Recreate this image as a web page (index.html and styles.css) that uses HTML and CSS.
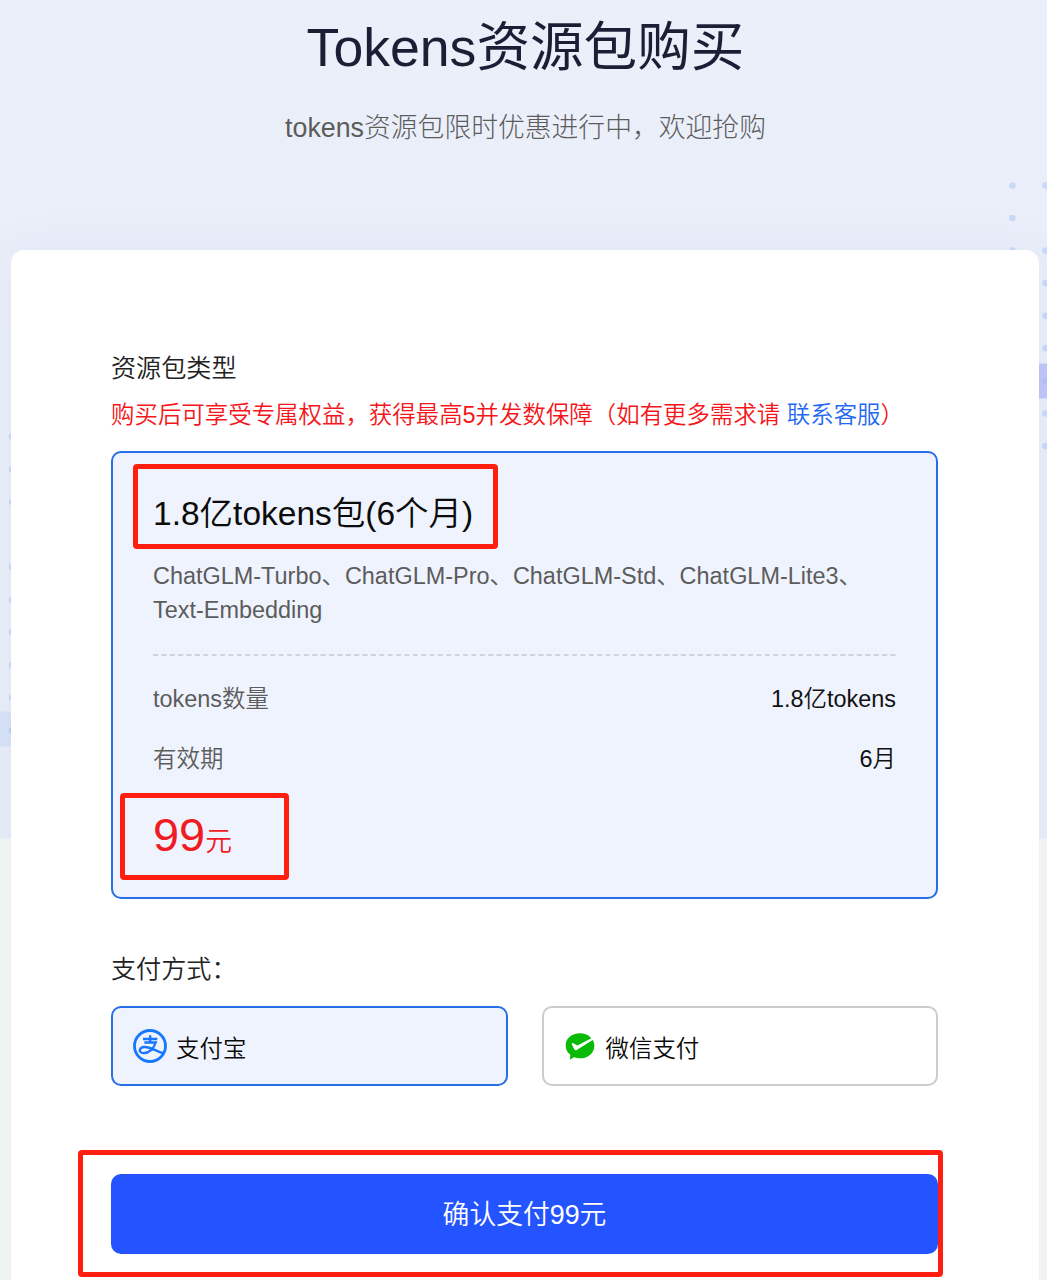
FILE: index.html
```html
<!DOCTYPE html>
<html lang="zh-CN">
<head>
<meta charset="utf-8">
<title>Tokens资源包购买</title>
<link rel="stylesheet" href="styles.css">
</head>
<body>
<div class="page">
  <svg class="decor" viewBox="0 0 1047 838" aria-hidden="true">
    <g fill="#c8daf9">
      <circle cx="1012.5" cy="185.5" r="3.3"/><circle cx="1012.5" cy="218" r="3.3"/><circle cx="1012.5" cy="250.5" r="3.3"/>
      <circle cx="1045.5" cy="185.5" r="3.3"/><circle cx="1045.5" cy="250.5" r="3.3"/><circle cx="1045.5" cy="283" r="3.3"/>
      <circle cx="1045.5" cy="315.7" r="3.3"/><circle cx="1045.5" cy="348.3" r="3.3"/><circle cx="1045.5" cy="413.5" r="3.3"/>
      <circle cx="1045.5" cy="446" r="3.3"/>
      <circle cx="12" cy="436.5" r="3.3"/><circle cx="12" cy="469.3" r="3.3"/><circle cx="12" cy="502" r="3.3"/>
      <circle cx="12" cy="567" r="3.3"/><circle cx="12" cy="599.8" r="3.3"/><circle cx="12" cy="632.5" r="3.3"/>
      <circle cx="12" cy="665" r="3.3"/><circle cx="12" cy="697.7" r="3.3"/>
    </g>
    <rect x="1030" y="363.5" width="17" height="35" fill="#bfc7f8"/>
    <circle cx="1045.5" cy="381" r="3.3" fill="#b5c0f9"/>
    <rect x="0" y="711.5" width="20" height="35" fill="#d8e3f7"/>
    <circle cx="12" cy="730.4" r="3.3" fill="#c0cef6"/>
  </svg>
  <header class="hero">
    <h1 class="hero-title">Tokens资源包购买</h1>
    <p class="hero-sub">tokens资源包限时优惠进行中，欢迎抢购</p>
  </header>
  <main class="card">
    <h2 class="label">资源包类型</h2>
    <p class="notice">购买后可享受专属权益，获得最高5并发数保障（如有更多需求请 <a class="link">联系客服</a>）</p>
    <section class="pack">
      <h3 class="pack-title">1.8亿tokens包(6个月)</h3>
      <p class="pack-desc">ChatGLM-Turbo、ChatGLM-Pro、ChatGLM-Std、ChatGLM-Lite3、<br>Text-Embedding</p>
      <svg class="divider" viewBox="0 0 743 2" aria-hidden="true"><path d="M0 1H743" stroke="#c6c9d2" stroke-width="1.7" stroke-dasharray="5 3.38"/></svg>
      <div class="row"><span>tokens数量</span><span class="value">1.8亿tokens</span></div>
      <div class="row"><span>有效期</span><span class="value">6月</span></div>
      <div class="price">99<span class="unit">元</span></div>
      <div class="mark mark-title"></div>
      <div class="mark mark-price"></div>
    </section>
    <h2 class="label label-pay">支付方式：</h2>
    <div class="methods">
      <div class="method selected">
        <svg class="icon" viewBox="0 0 102 102" fill="none" stroke="#1677ff">
          <circle cx="51" cy="51" r="46.5" stroke-width="8.5"/>
          <path d="M30 30H73M51.500 19V40" stroke-width="7"/>
          <path d="M34 40.500H68C63 58 48 73 31 72.500C15 71 18 55 34 54C50 53 65 64 91 73" stroke-width="7"/>
        </svg>
        <span class="method-name">支付宝</span>
      </div>
      <div class="method">
        <svg class="icon" viewBox="0 0 102 102">
          <path fill="#09bb07" d="M51 13C26 13 8 28 8 50C8 62 14 71 22 77L21 92L34 84C39 87 45 88 51 88C76 88 94 72 94 50C94 43 92 37 89 33L41 63C38 65 36 64 34 61L26 45C26 42 28 41 30 42L40 48C42 49 44 49 46 48L85 28C77 18 65 13 51 13Z"/>
        </svg>
        <span class="method-name">微信支付</span>
      </div>
    </div>
    <div class="submit">
      <button class="pay">确认支付99元</button>
      <div class="mark mark-pay"></div>
    </div>
  </main>
</div>
</body>
</html>
```
FILE: styles.css
```css
* { box-sizing: border-box; }
body {
  margin: 0;
  background: #f4f6f5;
  font-family: "Liberation Sans", "Noto Sans CJK SC", sans-serif;
  font-weight: 350;
  color: #0b0b0b;
}
h1, h2, h3, p { margin: 0; font-weight: inherit; }
.page {
  position: relative;
  height: 1280px;
  overflow: hidden;
  background: linear-gradient(#ebeffa, #e8edf8) 0 0 / 100% 838.5px no-repeat;
}
.decor { position: absolute; left: 0; top: 0; width: 1047px; height: 838px; }
.hero { position: relative; height: 250px; padding: 1px 0 0 4px; text-align: center; }
.hero-title { font-size: 53.6px; line-height: 93px; color: #1a1f36; font-weight: 400; }
.hero-sub { margin-top: 14px; font-size: 26.8px; line-height: 40px; color: #5c5c5c; font-weight: 300; }
.card {
  position: relative;
  width: 1028px;
  height: 1100px;
  margin-left: 11px;
  padding: 98px 101px 0 100px;
  background: #fff;
  border-radius: 13px;
  box-shadow: 0 0 50px rgba(80, 100, 150, .06);
}
.label { font-size: 25.1px; line-height: 40px; color: #222; }
.notice { margin-top: 7px; font-size: 23.45px; line-height: 40px; color: #f5161b; white-space: nowrap; }
.link { color: #2468f2; }
.pack {
  position: relative;
  height: 448px;
  margin-top: 16px;
  padding: 36px 40px 0;
  background: #eff3fe;
  border: 2px solid #276ee8;
  border-radius: 10px;
}
.pack-title { font-size: 33.5px; line-height: 50px; }
.pack-desc { margin-top: 21px; font-size: 23.45px; line-height: 33.5px; color: #5c5c5c; white-space: nowrap; }
.divider { display: block; width: 743px; height: 2px; margin: 27px 0 22.5px; }
.row { display: flex; justify-content: space-between; margin-bottom: 20px; font-size: 23.45px; line-height: 40px; color: #5c5c5c; }
.value { color: #111; }
.price { margin-top: 26px; font-size: 46.9px; line-height: 60px; color: #f01b23; }
.unit { font-size: 26.8px; }
.mark { position: absolute; border: 5px solid #ff1e10; border-radius: 4px; }
.mark-title { left: 20px; top: 11px; width: 365px; height: 85px; }
.mark-price { left: 7px; top: 340px; width: 169px; height: 87px; }
.label-pay { margin-top: 50px; }
.methods { display: grid; grid-template-columns: 1fr 1fr; gap: 34px; margin-top: 17px; }
.method {
  display: flex;
  align-items: center;
  height: 80px;
  padding-left: 20px;
  border: 2px solid #ccc;
  border-radius: 10px;
  font-size: 23.45px;
  line-height: 40px;
}
.method.selected { background: #eff3fe; border-color: #276ee8; }
.icon { width: 34px; height: 34px; margin-right: 9px; }
.method + .method .icon { margin-left: -1px; }
.method-name { padding-top: 5px; }
.submit { position: relative; margin-top: 87.5px; }
.pay {
  display: block;
  width: 100%;
  height: 80px;
  padding: 0 0 2px;
  border: 0;
  border-radius: 10px;
  background: #2454ff;
  color: #fff;
  font: inherit;
  font-size: 26.8px;
}
.mark-pay { left: -33px; top: -24px; width: 865px; height: 127px; }
```
